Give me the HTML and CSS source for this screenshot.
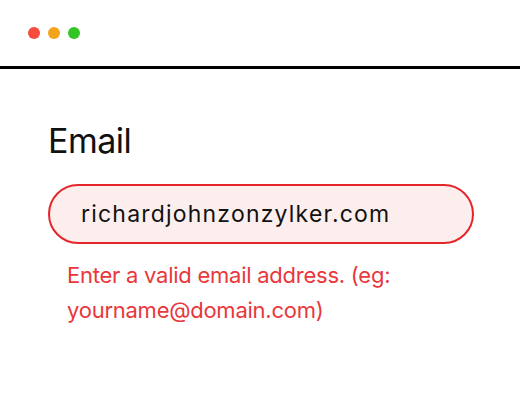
FILE: index.html
```html
<!DOCTYPE html>
<html>
<head>
<meta charset="utf-8">
<link rel="stylesheet" href="styles.css">
</head>
<body>
<div class="window">
  <div class="titlebar">
    <span class="dot red"></span>
    <span class="dot yellow"></span>
    <span class="dot green"></span>
  </div>
  <div class="content">
    <div class="label">Email</div>
    <div class="input">richardjohnzonzylker.com</div>
    <div class="error">Enter a valid email address. (eg:<br>yourname@domain.com)</div>
  </div>
</div>
</body>
</html>
```
FILE: styles.css
```css
html, body {
  margin: 0;
  padding: 0;
  background: #ffffff;
}
.window {
  width: 520px;
  height: 408px;
  font-family: "Inter", "Noto Sans", sans-serif;
}
.titlebar {
  height: 65px;
  border-bottom: 3px solid #000;
  display: flex;
  align-items: center;
  gap: 8px;
  padding-left: 28px;
  box-sizing: content-box;
  padding-bottom: 1px;
}
.dot {
  width: 12px;
  height: 12px;
  border-radius: 50%;
  display: block;
}
.red { background: #f74b3d; }
.yellow { background: #f2a41a; }
.green { background: #35c426; }
.content {
  padding: 52px 46px 0 48px;
}
.label {
  font-size: 34px;
  line-height: 40px;
  letter-spacing: -0.5px;
  color: #111;
}
.input {
  margin-top: 23px;
  height: 56px;
  border: 2px solid #e4262a;
  border-radius: 31px;
  background: #fdeeee;
  display: flex;
  align-items: center;
  padding-left: 31px;
  font-size: 23px;
  letter-spacing: 1.2px;
  color: #111;
}
.error {
  margin-top: 14px;
  padding-left: 19px;
  color: #e9373b;
  font-size: 22px;
  letter-spacing: -0.25px;
  line-height: 35px;
}
```
